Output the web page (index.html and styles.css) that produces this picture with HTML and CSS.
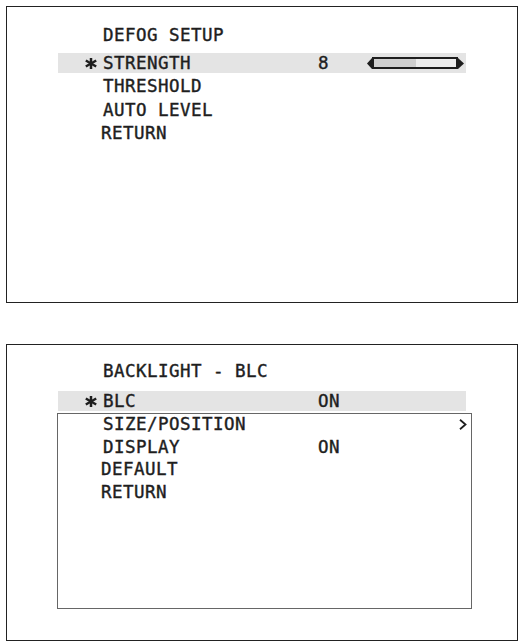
FILE: index.html
```html
<!DOCTYPE html>
<html>
<head>
<meta charset="utf-8">
<link rel="stylesheet" href="styles.css">
</head>
<body>
<section class="panel panel-defog">
  <div class="title">DEFOG SETUP</div>
  <div class="menu">
    <div class="row sel">
      <span class="mark"><svg width="12" height="11" viewBox="0 0 12 11"><g stroke="#1e1e1e" stroke-width="2.5" stroke-linecap="butt"><line x1="6" y1="0" x2="6" y2="11"/><line x1="0.8" y1="2.5" x2="11.2" y2="8.5"/><line x1="0.8" y1="8.5" x2="11.2" y2="2.5"/></g></svg></span>
      <span class="label">STRENGTH</span>
      <span class="value">8</span>
      <span class="slider">
        <svg class="tri" width="5" height="11" viewBox="0 0 5 11"><polygon points="5,0 0,5.5 5,11" fill="#1e1e1e"/></svg>
        <span class="track"><span class="fill" style="width:51%"></span></span>
        <svg class="tri" width="6" height="11" viewBox="0 0 6 11"><polygon points="0,0 6,5.5 0,11" fill="#1e1e1e"/></svg>
      </span>
    </div>
    <div class="row"><span class="mark"></span><span class="label">THRESHOLD</span></div>
    <div class="row"><span class="mark"></span><span class="label">AUTO LEVEL</span></div>
    <div class="row"><span class="mark"></span><span class="label shift">RETURN</span></div>
  </div>
</section>

<section class="panel panel-blc">
  <div class="title">BACKLIGHT - BLC</div>
  <div class="menu">
    <div class="row sel">
      <span class="mark"><svg width="12" height="11" viewBox="0 0 12 11"><g stroke="#1e1e1e" stroke-width="2.5" stroke-linecap="butt"><line x1="6" y1="0" x2="6" y2="11"/><line x1="0.8" y1="2.5" x2="11.2" y2="8.5"/><line x1="0.8" y1="8.5" x2="11.2" y2="2.5"/></g></svg></span>
      <span class="label">BLC</span>
      <span class="value">ON</span>
    </div>
    <div class="area">
      <div class="row">
        <span class="mark"></span><span class="label">SIZE/POSITION</span><span class="value"></span>
        <span class="chev"><svg width="8" height="11" viewBox="0 0 8 11"><polyline points="1,0.8 6.5,5.5 1,10.2" fill="none" stroke="#1e1e1e" stroke-width="1.8"/></svg></span>
      </div>
      <div class="row"><span class="mark"></span><span class="label">DISPLAY</span><span class="value">ON</span></div>
      <div class="row"><span class="mark"></span><span class="label shift">DEFAULT</span></div>
      <div class="row"><span class="mark"></span><span class="label shift">RETURN</span></div>
    </div>
  </div>
</section>
</body>
</html>
```

FILE: styles.css
```css
html, body {
  margin: 0;
  padding: 0;
  background: #ffffff;
}

body {
  padding: 6px 0 0 6px;
  font-family: "DejaVu Sans Mono", "Liberation Mono", monospace;
  font-size: 17.5px;
  letter-spacing: 0.47px;
  color: #1e1e1e;
  -webkit-text-stroke: 0.4px #1e1e1e;
}

.panel {
  box-sizing: border-box;
  width: 512px;
  height: 297px;
  border: 1px solid #222222;
}

.panel-defog {
  padding-top: 18px;
}

.panel-blc {
  margin-top: 41px;
  padding-top: 16px;
}

.title {
  height: 20px;
  line-height: 20px;
  padding-left: 96px;
}

.menu {
  margin-left: 51px;
  width: 408px;
}

.panel-defog .menu {
  margin-top: 8px;
}

.panel-blc .menu {
  margin-top: 10px;
}

.row {
  display: grid;
  grid-template-columns: 45px 215px 49px 1fr;
  align-items: center;
  height: 20px;
  line-height: 20px;
  white-space: nowrap;
}

.panel-defog .row {
  margin-bottom: 3.3px;
}

.row.sel {
  background: #e4e4e4;
}

.mark {
  display: flex;
  justify-content: flex-end;
  padding-right: 6px;
}

.mark svg {
  display: block;
}

.shift {
  margin-left: -2px;
}

.slider {
  display: flex;
  align-items: center;
}

.tri {
  display: block;
}

.track {
  box-sizing: border-box;
  width: 86px;
  height: 12px;
  border: 2px solid #1e1e1e;
  background: #ededed;
  display: flex;
}

.fill {
  display: block;
  height: 100%;
  background: #cfcfcf;
}

.area {
  box-sizing: border-box;
  margin-top: 2px;
  margin-left: -1px;
  width: 415px;
  height: 196px;
  border: 1px solid #666666;
}

.area .row {
  margin-bottom: 2.5px;
}

.chev {
  justify-self: end;
  margin-right: 4px;
  display: flex;
}

.chev svg {
  display: block;
}
```
